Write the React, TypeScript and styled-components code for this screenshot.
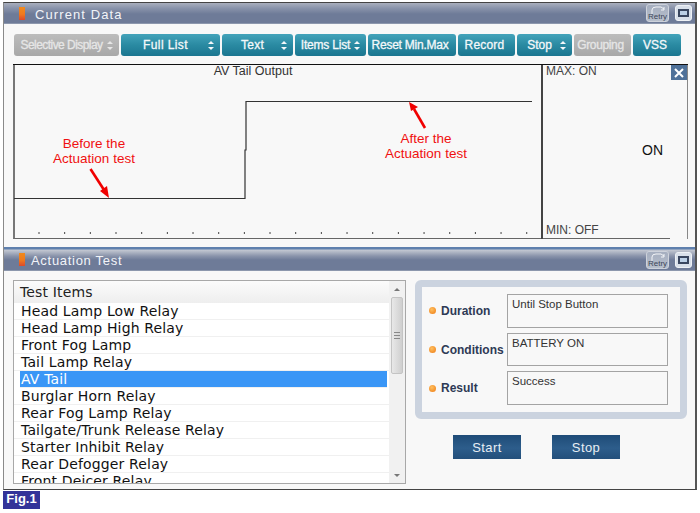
import React from 'react';
import styled, {createGlobalStyle} from 'styled-components';

const GlobalStyle = createGlobalStyle`
  html, body {
    margin: 0;
    padding: 0;
    background: #fff;
  }
  body {
    font-family: "Liberation Sans", Arial, sans-serif;
  }
`;

const Page = styled.div`
  width: 700px;
  height: 513px;
  padding: 2px 0 0 3px;
  box-sizing: border-box;
  overflow: hidden;
`;

const Frame = styled.div`
  width: 694px;
  height: 488px;
  box-sizing: border-box;
  border: 1px solid #666;
  border-left-color: #8a8a8a;
  border-top-color: #444;
  border-bottom-color: #444;
  border-right: 2px solid #555;
  background: #f8f8f8;
  display: flex;
  flex-direction: column;
`;

const TitleBar = styled.div<{$second?: boolean}>`
  height: ${p => (p.$second ? 24 : 21)}px;
  margin-top: ${p => (p.$second ? 8 : 0)}px;
  flex: none;
  display: flex;
  align-items: center;
  box-sizing: border-box;
  padding: ${p => (p.$second ? '2px' : '0')} 3px 0 15px;
  background: ${p =>
    p.$second
      ? 'linear-gradient(#5f80ae 0, #5f80ae 2px, #c3c8d2 3px, #8a94ab 9px, #6e7b98 13px)'
      : 'linear-gradient(#a9afbd 0, #8a94ab 5px, #6e7b98 11px)'};
  border-bottom: 1px solid #8c97ad;
`;

const Lamp = styled.span`
  width: 6px;
  height: 13px;
  margin-right: 10px;
  background: linear-gradient(#f08a1c, #ef7a1e 55%, #dd4a2a);
`;

const TitleText = styled.span<{$second?: boolean}>`
  flex: 1;
  margin-left: ${p => (p.$second ? -4 : 0)}px;
  padding-top: ${p => (p.$second ? 1 : 2)}px;
  color: #f2f4f8;
  font-size: 13px;
  letter-spacing: ${p => (p.$second ? 0.7 : 1.1)}px;
`;

const RetryButton = styled.div`
  position: relative;
  width: 23px;
  height: 18px;
  box-sizing: border-box;
  border: 1px solid #cdd2db;
  border-radius: 3px;
  background: linear-gradient(#a5aebf, #b7bfcc);
  color: #3c4658;
  font-size: 8px;
  line-height: 8px;
  text-align: center;
  padding-top: 8px;
  margin-right: 6px;
  svg {
    position: absolute;
    left: 3px;
    top: 1px;
  }
`;

const WindowButton = styled.div`
  width: 17px;
  height: 16px;
  box-sizing: border-box;
  border-radius: 3px;
  background: #d9e0ea;
  border: 1px solid #eef1f5;
  padding: 3px 2px;
  &::before {
    content: '';
    display: block;
    height: 100%;
    box-sizing: border-box;
    border: 2px solid #39465f;
    background: #bcd0e6;
  }
`;

const Toolbar = styled.div`
  flex: none;
  height: 40px;
  box-sizing: border-box;
  display: flex;
  gap: 2px;
  padding: 10px 0 0 10px;
`;

const ToolButton = styled.div<{$width: number; $disabled?: boolean; $track?: number}>`
  width: ${p => p.$width}px;
  height: 22px;
  flex: none;
  box-sizing: border-box;
  display: flex;
  align-items: center;
  border-radius: 3px;
  padding: 0 6px 0 2px;
  color: ${p => (p.$disabled ? '#e6e6e6' : '#f4f8fa')};
  font-size: 12px;
  letter-spacing: ${p => p.$track ?? 0}px;
  -webkit-text-stroke: 0.3px currentColor;
  white-space: nowrap;
  background: ${p =>
    p.$disabled
      ? 'linear-gradient(#bcbcbc, #a8a8a8)'
      : 'linear-gradient(#43a3ba, #2a8aa2 50%, #1b7690)'};
`;

const ToolLabel = styled.span`
  flex: 1;
  text-align: center;
`;

const Chart = styled.div`
  flex: none;
  height: 175px;
  margin: 0 7px 0 9px;
  box-sizing: border-box;
  display: flex;
  border-top: 1px solid #111;
`;

const Plot = styled.div`
  position: relative;
  width: 528px;
  flex: none;
  box-sizing: border-box;
  border-left: 2px solid #777;
  border-bottom: 1px solid #666;
  padding-right: 50px;
  color: #333;
  font-size: 12.5px;
  text-align: center;
  line-height: 13px;
  svg {
    position: absolute;
    left: -2px;
    top: -1px;
  }
`;

const Note = styled.div<{$x: number; $y: number}>`
  position: absolute;
  left: ${p => p.$x}px;
  top: ${p => p.$y}px;
  width: 110px;
  color: #f01010;
  font-size: 13.5px;
  line-height: 14.5px;
  text-align: center;
`;

const Side = styled.div`
  position: relative;
  flex: 1;
  box-sizing: border-box;
  border-left: 2px solid #444;
  border-right: 1px solid #888;
  padding: 0 0 2px 3px;
  display: flex;
  flex-direction: column;
  justify-content: space-between;
  color: #444;
  font-size: 12px;
  line-height: 13px;
  background: linear-gradient(#666, #666) no-repeat left bottom / 127px 1px;
`;

const CloseBox = styled.div`
  position: absolute;
  right: 0;
  top: 0;
  width: 16px;
  height: 15px;
  background: #4f7199;
  color: #fff;
  display: flex;
  align-items: center;
  justify-content: center;
`;

const SideValue = styled.div`
  position: absolute;
  left: 99px;
  top: 78px;
  color: #111;
  font-size: 14px;
  line-height: 15px;
`;

const TestArea = styled.div`
  flex: 1;
  min-height: 0;
  display: flex;
  padding: 9px 8px 5px 9px;
  gap: 9px;
`;

const ListBox = styled.div`
  width: 393px;
  flex: none;
  box-sizing: border-box;
  border: 1px solid #a8a8a8;
  background: #fff;
  display: flex;
  overflow: hidden;
`;

const ListBody = styled.div`
  flex: 1;
  min-width: 0;
  overflow: hidden;
`;

const ListHeader = styled.div`
  height: 22px;
  box-sizing: border-box;
  padding: 3px 0 0 6px;
  background: linear-gradient(#fbfbfb, #eeeeee);
  color: #222;
  font-family: "DejaVu Sans", sans-serif;
  font-size: 14px;
  letter-spacing: 0.15px;
  line-height: 16px;
`;

const Row = styled.div<{$selected?: boolean}>`
  height: 17px;
  box-sizing: border-box;
  border-bottom: 1px solid #f0f0f0;
  margin-left: ${p => (p.$selected ? 6 : 0)}px;
  margin-right: ${p => (p.$selected ? 2 : 0)}px;
  padding-left: ${p => (p.$selected ? 1 : 7)}px;
  background: ${p => (p.$selected ? '#3a96f6' : 'transparent')};
  color: ${p => (p.$selected ? '#fff' : '#111')};
  font-family: "DejaVu Sans", sans-serif;
  font-size: 14px;
  letter-spacing: 0.15px;
  line-height: 17px;
  white-space: nowrap;
`;

const ScrollTrack = styled.div`
  width: 16px;
  flex: none;
  display: flex;
  flex-direction: column;
  align-items: center;
  background: #f1f1f1;
`;

const ScrollArrow = styled.div<{$down?: boolean}>`
  height: 16px;
  flex: none;
  display: flex;
  align-items: center;
  justify-content: center;
  &::before {
    content: '';
    border: 3px solid transparent;
    border-top-width: ${p => (p.$down ? 3 : 0)}px;
    border-bottom-width: ${p => (p.$down ? 0 : 3)}px;
    border-top-color: #777;
    border-bottom-color: #777;
  }
`;

const ScrollThumb = styled.div`
  width: 12px;
  height: 77px;
  flex: none;
  border-radius: 2px;
  border: 1px solid #c4c4c4;
  box-sizing: border-box;
  background: linear-gradient(90deg, #e8e8e8, #cfcfcf);
  display: flex;
  align-items: center;
  justify-content: center;
  &::before {
    content: '';
    width: 6px;
    height: 5px;
    border-top: 1px solid #888;
    border-bottom: 1px solid #888;
    background: linear-gradient(#888, #888) no-repeat center / 100% 1px;
  }
`;

const ScrollGap = styled.div`
  flex: 1;
`;

const RightColumn = styled.div`
  flex: 1;
  display: flex;
  flex-direction: column;
`;

const InfoPanel = styled.div`
  height: 139px;
  box-sizing: border-box;
  border: 7px solid #cbd3df;
  border-radius: 6px;
  background: #f8f8f8;
  padding: 7px 12px 7px 7px;
  display: flex;
  flex-direction: column;
  gap: 5px;
`;

const InfoRow = styled.div`
  flex: 1;
  display: flex;
  align-items: center;
`;

const Dot = styled.span`
  width: 7px;
  height: 7px;
  flex: none;
  margin-right: 5px;
  border-radius: 50%;
  background: radial-gradient(circle at 40% 35%, #ffc060, #ee7a12);
`;

const InfoLabel = styled.span`
  width: 66px;
  flex: none;
  color: #2e3a55;
  font-size: 12px;
  font-weight: 700;
`;

const InfoValue = styled.div`
  flex: 1;
  align-self: stretch;
  box-sizing: border-box;
  border: 1px solid #a4a4a4;
  padding: 2px 4px;
  color: #333;
  font-size: 11.5px;
  line-height: 14px;
`;

const Actions = styled.div`
  display: flex;
  gap: 31px;
  padding: 16px 0 0 38px;
`;

const ActionButton = styled.div`
  width: 68px;
  height: 24px;
  display: flex;
  align-items: center;
  justify-content: center;
  background: linear-gradient(#1f4c78, #2d5d8b 55%, #234f7b);
  color: #e8eef4;
  font-size: 13px;
  letter-spacing: 0.4px;
`;

const FigTag = styled.div`
  width: 37px;
  height: 18px;
  margin-top: 1px;
  background: #333399;
  color: #fff;
  font-size: 13px;
  font-weight: 700;
  line-height: 16px;
  text-align: center;
`;

const Stepper = () => (
  <svg width="6" height="11" viewBox="0 0 6 11" fill="currentColor" stroke="none">
    <path d="M3 1 6 4H0Z" />
    <path d="M0 7h6L3 10Z" />
  </svg>
);

const tools: {label: string; width: number; stepper?: boolean; disabled?: boolean; track?: number}[] = [
  {label: 'Selective Display', width: 105, stepper: true, disabled: true, track: -0.55},
  {label: 'Full List', width: 99, stepper: true, track: 0.4},
  {label: 'Text', width: 71, stepper: true, track: 0.3},
  {label: 'Items List', width: 71, stepper: true, track: -0.2},
  {label: 'Reset Min.Max', width: 88, track: -0.25},
  {label: 'Record', width: 57, track: 0.2},
  {label: 'Stop', width: 55, stepper: true},
  {label: 'Grouping', width: 57, disabled: true, track: -0.35},
  {label: 'VSS', width: 48},
];

const testItems = [
  'Head Lamp Low Relay',
  'Head Lamp High Relay',
  'Front Fog Lamp',
  'Tail Lamp Relay',
  'AV Tail',
  'Burglar Horn Relay',
  'Rear Fog Lamp Relay',
  'Tailgate/Trunk Release Relay',
  'Starter Inhibit Relay',
  'Rear Defogger Relay',
  'Front Deicer Relay',
];

const infoRows = [
  {label: 'Duration', value: 'Until Stop Button'},
  {label: 'Conditions', value: 'BATTERY ON'},
  {label: 'Result', value: 'Success'},
];

// tick marks run along the bottom of the plot, one every 25.67px
const ticks = Array.from({length: 20}, (_, i) => 26 + i * 25.67);

const TraceChart = () => (
  <svg width="528" height="175" viewBox="0 0 528 175" fill="none">
    {ticks.map(x => (
      <line key={x} x1={x} x2={x} y1="168" y2="170" stroke="#444" />
    ))}
    <path d="M1 134.5H232V86H233V37.5H519" stroke="#333" strokeWidth="1.2" />
    <line x1="77.5" y1="105" x2="93" y2="129" stroke="#f00000" strokeWidth="2.6" />
    <path d="M96 134 87 127 94 122Z" fill="#f00000" />
    <line x1="412" y1="64" x2="401" y2="45" stroke="#f00000" strokeWidth="2.6" />
    <path d="M396 38 405 43 398 47Z" fill="#f00000" />
  </svg>
);

const TitleActions = () => (
  <>
    <RetryButton>
      <svg width="16" height="8" viewBox="0 0 16 8" fill="none" stroke="#f2f4f7">
        <path d="M2 8V4Q2 1 6 1H11L14 3" />
        <path d="M14 1V4H11" />
      </svg>
      Retry
    </RetryButton>
    <WindowButton />
  </>
);

export default function App() {
  return (
    <Page>
      <GlobalStyle />
      <Frame>
        <TitleBar>
          <Lamp />
          <TitleText>Current Data</TitleText>
          <TitleActions />
        </TitleBar>
        <Toolbar>
          {tools.map(t => (
            <ToolButton key={t.label} $width={t.width} $disabled={t.disabled} $track={t.track}>
              <ToolLabel>{t.label}</ToolLabel>
              {t.stepper && <Stepper />}
            </ToolButton>
          ))}
        </Toolbar>
        <Chart>
          <Plot>
            <TraceChart />
            AV Tail Output
            <Note $x={24} $y={72}>
              Before the
              <br />
              Actuation test
            </Note>
            <Note $x={356} $y={67}>
              After the
              <br />
              Actuation test
            </Note>
          </Plot>
          <Side>
            <span>MAX: ON</span>
            <CloseBox>
              <svg width="10" height="10" viewBox="0 0 10 10" stroke="#fff" strokeWidth="2">
                <path d="M1 1 9 9M9 1 1 9" />
              </svg>
            </CloseBox>
            <SideValue>ON</SideValue>
            <span>MIN: OFF</span>
          </Side>
        </Chart>
        <TitleBar $second>
          <Lamp />
          <TitleText $second>Actuation Test</TitleText>
          <TitleActions />
        </TitleBar>
        <TestArea>
          <ListBox>
            <ListBody>
              <ListHeader>Test Items</ListHeader>
              {testItems.map(item => (
                <Row key={item} $selected={item === 'AV Tail'}>
                  {item}
                </Row>
              ))}
            </ListBody>
            <ScrollTrack>
              <ScrollArrow />
              <ScrollThumb />
              <ScrollGap />
              <ScrollArrow $down />
            </ScrollTrack>
          </ListBox>
          <RightColumn>
            <InfoPanel>
              {infoRows.map(r => (
                <InfoRow key={r.label}>
                  <Dot />
                  <InfoLabel>{r.label}</InfoLabel>
                  <InfoValue>{r.value}</InfoValue>
                </InfoRow>
              ))}
            </InfoPanel>
            <Actions>
              <ActionButton>Start</ActionButton>
              <ActionButton>Stop</ActionButton>
            </Actions>
          </RightColumn>
        </TestArea>
      </Frame>
      <FigTag>Fig.1</FigTag>
    </Page>
  );
}
